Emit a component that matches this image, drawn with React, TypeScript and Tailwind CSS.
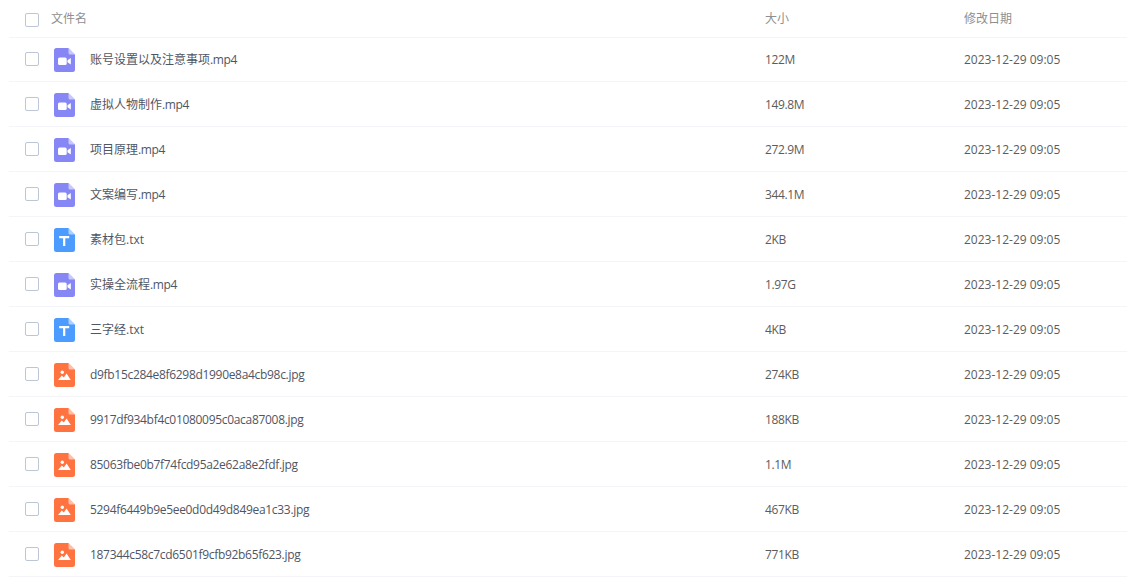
import React from "react";

type Kind = "video" | "text" | "image";

interface FileRow {
  name: string;
  size: string;
  kind: Kind;
}

const files: FileRow[] = [
  { name: "账号设置以及注意事项.mp4", size: "122M", kind: "video" },
  { name: "虚拟人物制作.mp4", size: "149.8M", kind: "video" },
  { name: "项目原理.mp4", size: "272.9M", kind: "video" },
  { name: "文案编写.mp4", size: "344.1M", kind: "video" },
  { name: "素材包.txt", size: "2KB", kind: "text" },
  { name: "实操全流程.mp4", size: "1.97G", kind: "video" },
  { name: "三字经.txt", size: "4KB", kind: "text" },
  { name: "d9fb15c284e8f6298d1990e8a4cb98c.jpg", size: "274KB", kind: "image" },
  { name: "9917df934bf4c01080095c0aca87008.jpg", size: "188KB", kind: "image" },
  { name: "85063fbe0b7f74fcd95a2e62a8e2fdf.jpg", size: "1.1M", kind: "image" },
  { name: "5294f6449b9e5ee0d0d49d849ea1c33.jpg", size: "467KB", kind: "image" },
  { name: "187344c58c7cd6501f9cfb92b65f623.jpg", size: "771KB", kind: "image" },
];

const fileColors: Record<Kind, string> = {
  video: "#8686f5",
  text: "#4c9bff",
  image: "#ff7340",
};

function FileIcon({ kind }: { kind: Kind }) {
  const color = fileColors[kind];
  return (
    <svg width="21" height="24" viewBox="0 0 21 24" className="block shrink-0">
      <path
        d="M2.5 0H14.5L21 6.5V21.5A2.5 2.5 0 0 1 18.5 24H2.5A2.5 2.5 0 0 1 0 21.5V2.5A2.5 2.5 0 0 1 2.5 0Z"
        fill={color}
      />
      <path d="M14.5 0L21 6.5H16A1.5 1.5 0 0 1 14.5 5Z" fill="#fff" fillOpacity="0.55" />
      {kind === "video" && (
        <>
          <rect x="4" y="9.5" width="8.7" height="7.5" rx="1.5" fill="#fff" />
          <path d="M13.5 12.2L16.8 10V16.5L13.5 14.3Z" fill="#fff" />
        </>
      )}
      {kind === "text" && (
        <path d="M5.2 8H15.2V10.2H11.3V18H9.1V10.2H5.2Z" fill="#fff" />
      )}
      {kind === "image" && (
        <>
          <circle cx="8.3" cy="9.3" r="1.7" fill="#fff" />
          <path d="M4 17L7.8 12.6L9.8 14.4L12.6 10.4L16.8 17Z" fill="#fff" />
        </>
      )}
    </svg>
  );
}

function Checkbox() {
  return <span className="block w-[14px] h-[14px] shrink-0 rounded-[2px] border border-[#bcc6d6] bg-white" />;
}

// Latin glyphs in the shot run a bit narrower than Open Sans, CJK ones don't
function FileName({ file }: { file: FileRow }) {
  if (file.kind === "image") {
    return <span className="ml-[15px] text-[#4f5663] tracking-[-0.31px]">{file.name}</span>;
  }
  const dot = file.name.lastIndexOf(".");
  return (
    <span className="ml-[15px] text-[#4f5663]">
      {file.name.slice(0, dot)}
      <span className={file.kind === "video" ? "tracking-[-0.35px]" : ""}>{file.name.slice(dot)}</span>
    </span>
  );
}

export default function App() {
  return (
    <div className="w-[1127px] h-[579px] overflow-hidden bg-white pl-[9px] text-[12px] font-['Open_Sans','Noto_Sans_CJK_SC',sans-serif]">
      <div className="flex items-center h-[38px] border-b border-[#f3f5f8] text-[#8f8f8f]">
        <div className="flex items-center flex-1 pl-[16px] gap-[12px]">
          <span className="mt-[3px]">
            <Checkbox />
          </span>
          <span>文件名</span>
        </div>
        <div className="w-[199px]">大小</div>
        <div className="w-[163px]">修改日期</div>
      </div>
      {files.map((file, i) => (
        <div
          key={file.name}
          className={`flex items-center border-b border-[#f3f5f8] text-[#5c5c5c] ${i === 0 ? "h-[44px]" : "h-[45px] pt-px"}`}
        >
          <div className="flex items-center flex-1 pl-[16px]">
            <span className="-mt-px">
              <Checkbox />
            </span>
            <span className="ml-[15px]">
              <FileIcon kind={file.kind} />
            </span>
            <FileName file={file} />
          </div>
          <div className="w-[199px] tracking-[-0.35px]">{file.size}</div>
          <div className="w-[163px]">2023-12-29 09:05</div>
        </div>
      ))}
    </div>
  );
}
